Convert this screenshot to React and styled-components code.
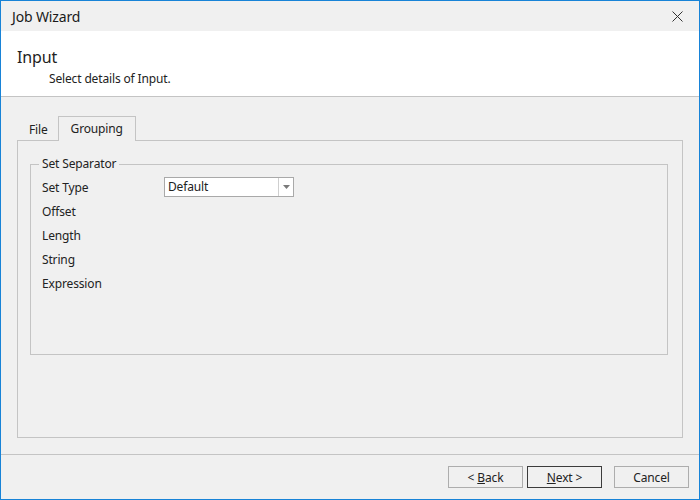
import React from "react";
import styled, { createGlobalStyle } from "styled-components";

const GlobalStyle = createGlobalStyle`
  html, body {
    margin: 0;
    padding: 0;
    background: #f0f0f0;
  }
  * {
    box-sizing: border-box;
  }
`;

const Window = styled.div`
  width: 700px;
  height: 500px;
  display: flex;
  flex-direction: column;
  border: 1px solid #1883d7;
  background: #f0f0f0;
  font-family: "Segoe UI", "Noto Sans", "Open Sans", sans-serif;
  font-size: 12px;
  letter-spacing: -0.15px;
  color: #222;
`;

const TitleBar = styled.div`
  height: 30px;
  flex: none;
  display: flex;
  align-items: center;
  justify-content: space-between;
  padding: 0 16px 0 11px;
  font-size: 14px;
  color: #1a1a1a;
`;

const CloseButton = styled.div`
  width: 12px;
  height: 12px;
  display: flex;
  align-items: center;
  justify-content: center;
`;

const Header = styled.div`
  height: 66px;
  flex: none;
  background: #fff;
  border-bottom: 1px solid #c4c4c4;
  padding: 15px 16px 0 16px;
`;

const HeaderTitle = styled.div`
  font-size: 16px;
  line-height: 22px;
`;

const HeaderSub = styled.div`
  margin-left: 32px;
  margin-top: 2px;
  line-height: 17px;
`;

const Body = styled.div`
  flex: 1;
  display: flex;
  flex-direction: column;
  padding: 18px 16px 16px 16px;
`;

const TabStrip = styled.div`
  display: flex;
  align-items: flex-end;
  height: 25px;
  padding-left: 2px;
`;

const Tab = styled.div`
  height: ${(p) => (p.$active ? "25px" : "22px")};
  padding: ${(p) => (p.$active ? "0 12px 1px 12px" : "0 9px 1px 9px")};
  display: flex;
  align-items: center;
  border: 1px solid ${(p) => (p.$active ? "#c4c4c4" : "transparent")};
  border-bottom: none;
  background: #f0f0f0;
  margin-bottom: ${(p) => (p.$active ? "-1px" : "0")};
  position: relative;
  z-index: 1;
`;

const Panel = styled.div`
  flex: 1;
  border: 1px solid #c4c4c4;
  padding: 15px 14px 0 12px;
`;

const GroupBox = styled.fieldset`
  margin: 0;
  height: 199px;
  border: 1px solid #c4c4c4;
  padding: 0 8px 0 8px;
`;

const Legend = styled.legend`
  padding: 0 3px;
  line-height: 16px;
`;

const FieldList = styled.div`
  display: flex;
  flex-direction: column;
  padding-top: 3px;
  padding-left: 3px;
`;

const Row = styled.div`
  height: 24px;
  display: flex;
  align-items: center;
`;

const Label = styled.div`
  width: 122px;
`;

const Combo = styled.div`
  width: 130px;
  height: 20px;
  display: flex;
  border: 1px solid #a9a9a9;
  background: #fff;
`;

const ComboText = styled.div`
  flex: 1;
  padding-left: 3px;
  line-height: 18px;
`;

const ComboArrow = styled.div`
  width: 15px;
  border-left: 1px solid #cfcfcf;
  display: flex;
  align-items: center;
  justify-content: center;
`;

const Footer = styled.div`
  height: 45px;
  flex: none;
  border-top: 1px solid #c4c4c4;
  display: flex;
  justify-content: flex-end;
  align-items: flex-start;
  padding: 11px 10px 0 0;
  gap: 4px;
`;

const Button = styled.button`
  width: 75px;
  height: 22px;
  margin-left: ${(p) => p.$gap || "0"};
  border: 1px solid ${(p) => (p.$default ? "#3c3c3c" : "#adadad")};
  background: #f0f0f0;
  font-family: inherit;
  font-size: 12px;
  letter-spacing: inherit;
  color: #222;
  padding: 0;
`;

const Key = styled.span`
  text-decoration: underline;
`;

export default function App() {
  return (
    <>
      <GlobalStyle />
      <Window>
        <TitleBar>
          <span>Job Wizard</span>
          <CloseButton>
            <svg width="11" height="11" viewBox="0 0 11 11">
              <path d="M0.5 0.5 L10.5 10.5 M10.5 0.5 L0.5 10.5" stroke="#333" strokeWidth="1" />
            </svg>
          </CloseButton>
        </TitleBar>
        <Header>
          <HeaderTitle>Input</HeaderTitle>
          <HeaderSub>Select details of Input.</HeaderSub>
        </Header>
        <Body>
          <TabStrip>
            <Tab>File</Tab>
            <Tab $active>Grouping</Tab>
          </TabStrip>
          <Panel>
            <GroupBox>
              <Legend>Set Separator</Legend>
              <FieldList>
                <Row>
                  <Label>Set Type</Label>
                  <Combo>
                    <ComboText>Default</ComboText>
                    <ComboArrow>
                      <svg width="7" height="4" viewBox="0 0 7 4">
                        <path d="M0 0 L7 0 L3.5 4 Z" fill="#7a7a7a" />
                      </svg>
                    </ComboArrow>
                  </Combo>
                </Row>
                <Row><Label>Offset</Label></Row>
                <Row><Label>Length</Label></Row>
                <Row><Label>String</Label></Row>
                <Row><Label>Expression</Label></Row>
              </FieldList>
            </GroupBox>
          </Panel>
        </Body>
        <Footer>
          <Button>&lt; <Key>B</Key>ack</Button>
          <Button $default><Key>N</Key>ext &gt;</Button>
          <Button $gap="8px">Cancel</Button>
        </Footer>
      </Window>
    </>
  );
}
